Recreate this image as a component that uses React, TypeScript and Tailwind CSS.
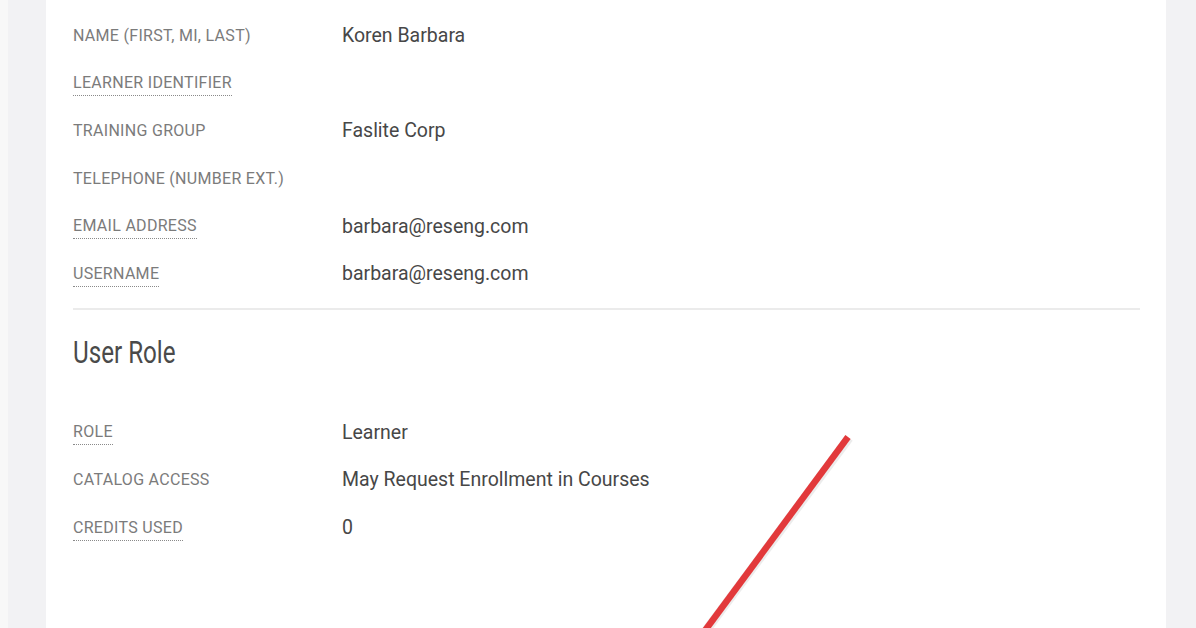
import React from "react";

type Row = { label: string; value?: string; dotted?: boolean };

const profile: Row[] = [
  { label: "Name (First, MI, Last)", value: "Koren Barbara" },
  { label: "Learner Identifier", dotted: true },
  { label: "Training Group", value: "Faslite Corp" },
  { label: "Telephone (Number Ext.)" },
  { label: "Email Address", value: "barbara@reseng.com", dotted: true },
  { label: "Username", value: "barbara@reseng.com", dotted: true },
];

const role: Row[] = [
  { label: "Role", value: "Learner", dotted: true },
  { label: "Catalog Access", value: "May Request Enrollment in Courses" },
  { label: "Credits Used", value: "0", dotted: true },
];

function FieldRow({ row }: { row: Row }) {
  return (
    <div className="flex items-center h-[47.6px]">
      <div className="w-[269px] shrink-0">
        <span
          className={
            "uppercase text-[16px] text-[#7b7b7b] tracking-[0.3px] " +
            (row.dotted ? "border-b-[1.5px] border-dotted border-[#8a8a8a] pb-[3px]" : "")
          }
        >
          {row.label}
        </span>
      </div>
      <div className="text-[19.5px] text-[#474747]">{row.value}</div>
    </div>
  );
}

export default function App() {
  return (
    <div
      className="relative w-[1196px] h-[628px] overflow-hidden bg-[#f2f2f4] flex"
      style={{ fontFamily: "Roboto, 'Liberation Sans', sans-serif" }}
    >
      <div className="w-[8px] shrink-0 bg-[#f8f8f8]" />
      <div className="w-[38px] shrink-0" />
      <div className="w-[1120px] shrink-0 bg-white pl-[27px] pr-[26px] pt-[12px]">
        <div className="flex flex-col">
          {profile.map((r) => (
            <FieldRow key={r.label} row={r} />
          ))}
        </div>
        <div className="mt-[10px] h-[2px] bg-[#ebebeb]" />
        <div className="mt-[25px] h-[36px] flex items-center">
          <span className="inline-block origin-left scale-x-[0.78] text-[31px] text-[#4a4a4a] leading-none whitespace-nowrap">
            User Role
          </span>
        </div>
        <div className="mt-[38px] flex flex-col">
          {role.map((r) => (
            <FieldRow key={r.label} row={r} />
          ))}
        </div>
      </div>
      <svg
        className="absolute left-0 top-0 pointer-events-none"
        width="1196"
        height="628"
        viewBox="0 0 1196 628"
      >
        <line x1="849" y1="438" x2="699" y2="640" stroke="#c9c9c9" strokeWidth="9" opacity="0.35" />
        <line x1="848" y1="437" x2="698" y2="640" stroke="#e2393b" strokeWidth="6.5" />
      </svg>
    </div>
  );
}
